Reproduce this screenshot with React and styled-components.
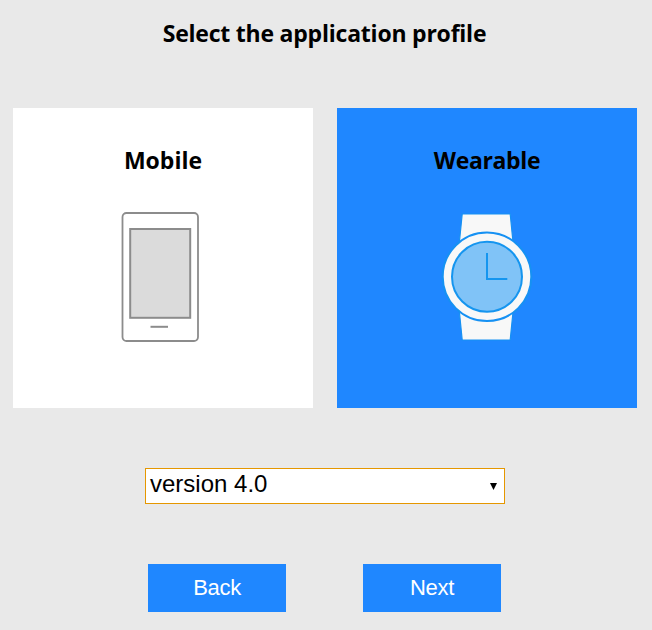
import React from "react";
import styled, { createGlobalStyle } from "styled-components";

const GlobalStyle = createGlobalStyle`
  * { box-sizing: border-box; }
  body { margin: 0; background: #e9e9e9; }
`;

const Page = styled.main`
  width: 652px;
  height: 630px;
  display: flex;
  flex-direction: column;
  overflow: hidden;
  background: #e9e9e9;
  color: #000;
`;

const Title = styled.h1`
  margin: 16px 0 0;
  padding-right: 3px;
  height: 34px;
  font: 700 23px/34px "Open Sans", sans-serif;
  letter-spacing: -0.22px;
  text-align: center;
  white-space: nowrap;
`;

const Profiles = styled.div`
  display: flex;
  gap: 24px;
  margin: 58px 0 0 13px;
`;

const ProfileCard = styled.section`
  width: 300px;
  height: 300px;
  padding-top: 35px;
  display: flex;
  flex-direction: column;
  align-items: center;
  gap: 27px;
  background: ${(p) => (p.$selected ? "#1f87ff" : "#fff")};
`;

const ProfileName = styled.h2`
  margin: 0;
  height: 34px;
  font: 700 23px/34px "Open Sans", sans-serif;
  letter-spacing: ${(p) => p.$tracking || "normal"};
`;

const DeviceIcon = styled.svg`
  display: block;
  width: 100px;
  height: 140px;
`;

const VersionSelect = styled.div`
  width: 360px;
  height: 36px;
  margin: 60px 0 0 145px;
  padding: 0 7px 0 4px;
  display: flex;
  justify-content: space-between;
  border: 1px solid #e59700;
  background: #fff;
  font: 24px/29px "Liberation Sans", Arial, sans-serif;
`;

const Arrow = styled.svg`
  width: 7px;
  height: 7px;
  margin-top: 14px;
`;

const Actions = styled.div`
  display: flex;
  gap: 77px;
  margin: 60px 0 0 148px;
`;

const Button = styled.button`
  width: 138px;
  height: 48px;
  padding: 0;
  border: 0;
  background: #1f87ff;
  color: #fff;
  font: 22px/48px "Liberation Sans", Arial, sans-serif;
  letter-spacing: -0.3px;
`;

const Phone = () => (
  <DeviceIcon viewBox="113 204 100 140" fill="none" stroke="#8c8c8c">
    <rect x="122.5" y="213" width="75.5" height="128" rx="4" strokeWidth="1.8" />
    <rect x="130.2" y="229" width="60" height="88.8" fill="#dbdbdb" strokeWidth="2" />
    <path d="M150.5 326.8H168" strokeWidth="2" />
  </DeviceIcon>
);

const Watch = () => (
  <DeviceIcon viewBox="437 204 100 140">
    <g fill="#f8f8f8" stroke="#1691f3" strokeWidth="1.2">
      <path d="M462.2 214H510.2L513 242H459.4Z" />
      <path d="M459.4 312H513L510.2 340H462.2Z" />
      <circle cx="487" cy="276.8" r="44.3" strokeWidth="2" />
    </g>
    <circle cx="487" cy="276.8" r="35" fill="#80c3f7" stroke="#1595ef" strokeWidth="2" />
    <path d="M487 253V279H507.3" fill="none" stroke="#1595ef" strokeWidth="2" />
  </DeviceIcon>
);

export default function App() {
  return (
    <Page>
      <GlobalStyle />
      <Title>Select the application profile</Title>
      <Profiles>
        <ProfileCard>
          <ProfileName>Mobile</ProfileName>
          <Phone />
        </ProfileCard>
        <ProfileCard $selected>
          <ProfileName $tracking="-0.35px">Wearable</ProfileName>
          <Watch />
        </ProfileCard>
      </Profiles>
      <VersionSelect role="combobox" aria-expanded="false">
        <span>version 4.0</span>
        <Arrow viewBox="0 0 7 7"><path d="M0 0H7L3.5 7Z" /></Arrow>
      </VersionSelect>
      <Actions>
        <Button>Back</Button>
        <Button>Next</Button>
      </Actions>
    </Page>
  );
}
